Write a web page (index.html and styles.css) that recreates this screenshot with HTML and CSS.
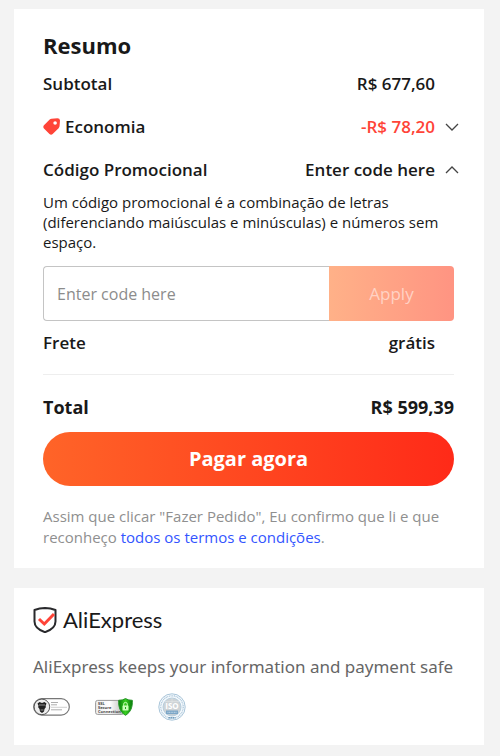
FILE: index.html
```html
<!DOCTYPE html>
<html lang="pt-BR">
<head>
<meta charset="utf-8">
<meta name="viewport" content="width=device-width, initial-scale=1">
<title>Resumo</title>
<link rel="stylesheet" href="styles.css">
</head>
<body>
<main class="page">
  <section class="card summary">
    <h1 class="summary-title">Resumo</h1>
    <div class="row"><span>Subtotal</span><span class="value">R$ 677,60</span></div>
    <div class="row">
      <span class="label"><svg class="tag" viewBox="0 0 16 16" aria-hidden="true"><path fill="#ff4438" fill-rule="evenodd" d="M8 .6 13.600 .3Q15.900.3 16 2.400L15.600 7.600Q15.500 8.700 14.700 9.600L9.100 15.100Q7.600 16.300 6.100 15.100L.9 9.900Q-.3 8.400.9 6.900L6.300 1.500Q7.100.7 8 .6ZM11.400 3a1.700 1.700 0 1 0 0 3.400a1.700 1.700 0 1 0 0-3.400Z"/></svg>Economia</span>
      <button class="value toggle discount" type="button">-R$ 78,20<svg class="chevron" viewBox="0 0 14 8" aria-hidden="true"><path d="M1 1 7 7 13 1"/></svg></button>
    </div>
    <div class="row">
      <label for="code">Código Promocional</label>
      <button class="value toggle" type="button">Enter code here<svg class="chevron" viewBox="0 0 14 8" aria-hidden="true"><path d="M1 7 7 1 13 7"/></svg></button>
    </div>
    <p class="hint">Um código promocional é a combinação de letras (diferenciando maiúsculas e minúsculas) e números sem espaço.</p>
    <form class="promo">
      <input class="promo-input" id="code" type="text" placeholder="Enter code here">
      <button class="promo-apply" type="button" disabled>Apply</button>
    </form>
    <div class="row"><span>Frete</span><span class="value">grátis</span></div>
    <div class="total"><span>Total</span><span>R$ 599,39</span></div>
    <button class="pay" type="button">Pagar agora</button>
    <p class="terms">Assim que clicar "Fazer Pedido", Eu confirmo que li e que reconheço <a href="#">todos os termos e condições</a>.</p>
  </section>

  <section class="card safety">
    <div class="brand">
      <svg class="shield" viewBox="0 0 24 26" aria-hidden="true">
        <path fill="#fff" stroke="#29292c" stroke-width="2" stroke-linejoin="round" d="M12 1Q17.500 1.200 22.500 3V14.500C22.500 20 17 23.500 12 25.200C7 23.500 1.500 20 1.500 14.500V3Q6.500 1.200 12 1Z"/>
        <path fill="none" stroke="#ff4438" stroke-width="3" d="M6 12 11.300 17 21 7"/>
      </svg>
      <span>AliExpress</span>
    </div>
    <p class="safe-text">AliExpress keeps your information and payment safe</p>
    <div class="badges">
      <svg class="badge-pill" viewBox="0 0 37 18" role="img">
        <rect x=".7" y=".7" width="35.600" height="16.400" rx="8.200" fill="#fff" stroke="#777" stroke-width="1.200"/>
        <circle cx="8.900" cy="8.900" r="7.800" fill="#eee" stroke="#555"/>
        <path fill="#222" d="M4.500 5.500 6.500 4 9 5 11.500 4 13.500 5.500 12.500 8 13 9 11.500 11 11 13.500 9 15 7 13.500 6.500 11 5 9 5.600 8Z"/>
        <path stroke="#ddd" stroke-width=".6" d="M6 7H12M7.500 12H10.500"/>
        <path stroke="#999" stroke-width=".8" d="M18 4.500H25M18 6.800H24M18 11.800H29"/>
        <path stroke="#bbb" stroke-width=".7" d="M18 9.300H34"/>
      </svg>
      <svg class="badge-ssl" viewBox="0 0 38 18" role="img">
        <defs>
          <linearGradient id="plate" x2="1"><stop stop-color="#eee"/><stop offset=".5" stop-color="#fff"/><stop offset="1" stop-color="#bbb"/></linearGradient>
          <linearGradient id="guard" x2="1"><stop stop-color="#087d0a"/><stop offset=".5" stop-color="#38cf20"/><stop offset="1" stop-color="#067909"/></linearGradient>
        </defs>
        <rect x=".6" y="2.400" width="28" height="14" rx="2" fill="url(#plate)" stroke="#999"/>
        <text class="ssl-text" x="3" y="7">SSL</text>
        <text class="ssl-text" x="3" y="11">Secure</text>
        <text class="ssl-text" x="3" y="15">Connection</text>
        <path fill="url(#guard)" stroke="#249326" d="M30.500.6Q33.500 2.500 37.300 2.300C37.600 9 36 14 30.500 17.300C25 14 23.400 9 23.700 2.300Q27.500 2.500 30.500.6Z"/>
        <rect x="27.500" y="7.500" width="6" height="5" rx=".6" fill="#c9ffb8"/>
        <path fill="none" stroke="#c9ffb8" d="M28.700 8V6.200a1.800 1.800 0 0 1 3.600 0V8"/>
        <path stroke="#269d20" d="M30.500 9V11"/>
      </svg>
      <svg class="badge-iso" viewBox="0 0 28 28" role="img">
        <circle cx="14" cy="14" r="13.200" fill="#f6fafd" stroke="#a9c5d9"/>
        <circle cx="14" cy="14" r="11.200" fill="none" stroke="#a6c3d8" stroke-width="1.200" stroke-dasharray="1 .7"/>
        <circle cx="14" cy="14" r="9" fill="#ced3d6" stroke="#b5cddd"/>
        <path stroke="#e2e6e8" stroke-width=".6" d="M7 8.500H21M14 5V10"/>
        <text class="iso-text" x="14" y="16">ISO</text>
        <rect x="8" y="17.500" width="12" height="3.600" fill="#7ba6c7"/>
        <path stroke="#dbe9f3" stroke-width=".8" stroke-dasharray="1 .6" d="M9.500 19.300H18.500"/>
        <path stroke="#719dbd" stroke-width="1.600" stroke-dasharray="1.500 .5" d="M10.500 24.700H17.500"/>
      </svg>
    </div>
  </section>
</main>
</body>
</html>
```
FILE: styles.css
```css
* {
  box-sizing: border-box;
}

body {
  margin: 0;
  background: #f3f3f3;
  color: #191919;
  font-family: "Open Sans", "Noto Sans", sans-serif;
}

h1,
p {
  margin: 0;
}

button,
input {
  font-family: inherit;
}

.page {
  display: flex;
  flex-direction: column;
  gap: 20px;
  padding: 9px 16px 11px 14px;
}

.card {
  background: #fff;
}

.summary {
  padding: 19px 30px 20px 29px;
}

.summary-title {
  font-size: 22px;
  font-weight: 700;
  line-height: 34px;
}

.row {
  display: flex;
  align-items: center;
  justify-content: space-between;
  height: 43px;
  font-size: 17px;
  font-weight: 600;
}

.label {
  display: flex;
  align-items: center;
  gap: 5px;
}

.tag {
  width: 17px;
  height: 17px;
}

.value {
  padding-right: 19px;
}

.toggle {
  display: flex;
  align-items: center;
  gap: 10px;
  padding: 0;
  margin-right: -5px;
  border: 0;
  background: none;
  color: inherit;
  font-size: 17px;
  font-weight: 600;
}

.discount {
  color: #ff4438;
}

.chevron {
  width: 14px;
  height: 8px;
  fill: none;
  stroke: #444;
  stroke-width: 1.3px;
}

.hint {
  margin-top: 1px;
  font-size: 15px;
  line-height: 20px;
}

.promo {
  display: flex;
  height: 55px;
  margin-top: 14px;
}

.promo-input {
  flex: 1;
  min-width: 0;
  padding: 0 13px;
  border: 1px solid #c4c4c4;
  border-right-width: 0;
  border-radius: 4px 0 0 4px;
  background: #fff;
  color: #191919;
  font-size: 16px;
}

.promo-input::placeholder {
  color: #8c8c8c;
}

.promo-apply {
  width: 125px;
  border: 0;
  border-radius: 0 4px 4px 0;
  background: linear-gradient(90deg, #ffb188, #ff9482);
  color: #ffd2c4;
  font-size: 17px;
}

.total {
  display: flex;
  align-items: center;
  justify-content: space-between;
  height: 58px;
  padding-top: 7px;
  margin-top: 10px;
  border-top: 1px solid #eee;
  font-size: 18px;
  font-weight: 700;
}

.pay {
  display: block;
  width: 100%;
  height: 54px;
  padding: 0 0 1px;
  border: 0;
  border-radius: 27px;
  background: linear-gradient(90deg, #ff6428, #ff2a18);
  color: #fff;
  font-size: 20px;
  font-weight: 700;
}

.terms {
  margin-top: 20px;
  color: #8f8f8f;
  font-size: 15px;
  line-height: 21px;
}

.terms a {
  color: #3355ff;
  text-decoration: none;
}

.safety {
  padding: 19px 19px 24px;
}

.brand {
  display: flex;
  align-items: center;
  gap: 6px;
  height: 26px;
  font-family: Lato, sans-serif;
  font-size: 22px;
  line-height: 24px;
}

.shield {
  width: 24px;
  height: 26px;
}

.safe-text {
  margin-top: 21px;
  color: #666;
  font-family: "Noto Sans", sans-serif;
  font-size: 17px;
  line-height: 26px;
}

.badges {
  display: flex;
  align-items: center;
  gap: 25px;
  height: 28px;
  margin-top: 13px;
}

.badge-pill {
  width: 37px;
  height: 18px;
}

.badge-ssl {
  width: 38px;
  height: 18px;
}

.badge-iso {
  width: 28px;
  height: 28px;
}

.ssl-text {
  fill: #444;
  font-size: 4px;
  font-weight: 700;
}

.iso-text {
  fill: #fff;
  font-size: 8px;
  font-weight: 700;
  text-anchor: middle;
}
```
